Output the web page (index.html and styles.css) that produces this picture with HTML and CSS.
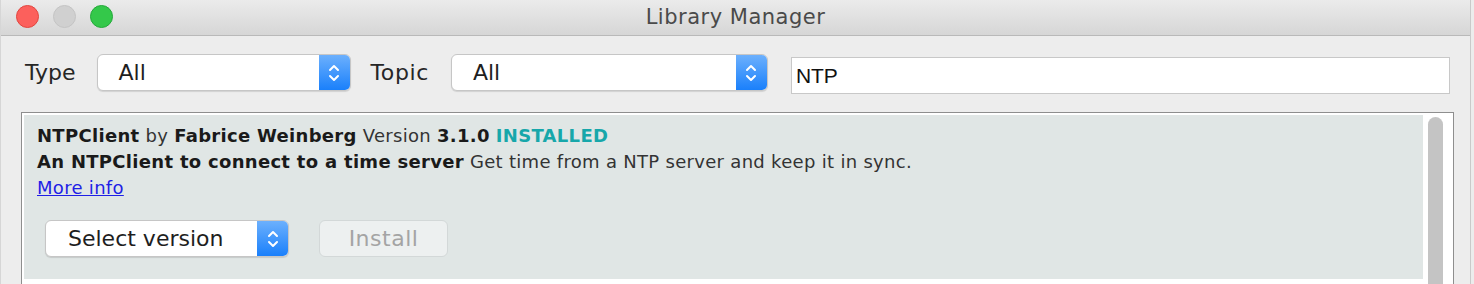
FILE: index.html
```html
<!DOCTYPE html>
<html lang="en">
<head>
    <meta charset="UTF-8">
    <title>Library Manager</title>
    <link rel="stylesheet" href="styles.css">
</head>
<body>
    <div class="window">
        <div class="titlebar">
            <div class="lights">
                <span class="light red"></span>
                <span class="light gray"></span>
                <span class="light green"></span>
            </div>
            <div class="title">Library Manager</div>
        </div>

        <div class="toolbar">
            <label class="field-label">Type</label>
            <div class="select select-type">
                <span class="select-text">All</span>
                <span class="select-arrows">
                    <svg width="14" height="22" viewBox="0 0 14 22"><path d="M3 8 L7 4 L11 8 M3 14 L7 18 L11 14" fill="none" stroke="#fff" stroke-width="2" stroke-linecap="round" stroke-linejoin="round"/></svg>
                </span>
            </div>
            <label class="field-label topic-label">Topic</label>
            <div class="select select-topic">
                <span class="select-text">All</span>
                <span class="select-arrows">
                    <svg width="14" height="22" viewBox="0 0 14 22"><path d="M3 8 L7 4 L11 8 M3 14 L7 18 L11 14" fill="none" stroke="#fff" stroke-width="2" stroke-linecap="round" stroke-linejoin="round"/></svg>
                </span>
            </div>
            <div class="search">NTP</div>
        </div>

        <div class="list-panel">
            <div class="list">
                <div class="item">
                    <div class="line"><b>NTPClient</b> by <b>Fabrice Weinberg</b> Version <b>3.1.0</b> <b class="installed">INSTALLED</b></div>
                    <div class="line"><b>An NTPClient to connect to a time server</b> Get time from a NTP server and keep it in sync.</div>
                    <div class="line"><a href="#" class="more">More info</a></div>
                    <div class="actions">
                        <div class="select select-version">
                            <span class="select-text">Select version</span>
                            <span class="select-arrows">
                                <svg width="14" height="22" viewBox="0 0 14 22"><path d="M3 8 L7 4 L11 8 M3 14 L7 18 L11 14" fill="none" stroke="#fff" stroke-width="2" stroke-linecap="round" stroke-linejoin="round"/></svg>
                            </span>
                        </div>
                        <button class="install" disabled>Install</button>
                    </div>
                </div>
            </div>
            <div class="scrollbar">
                <div class="thumb"></div>
            </div>
        </div>
    </div>
</body>
</html>
```

FILE: styles.css
```css
* {
    margin: 0;
    padding: 0;
    box-sizing: border-box;
}

body {
    background: #ececec;
    font-family: 'DejaVu Sans', Verdana, sans-serif;
    height: 284px;
    overflow: hidden;
}

.window {
    width: 1471px;
    height: 284px;
    background: #ededed;
    border-right: 1px solid #c9c9c9;
    border-left: 1px solid #d6d6d6;
}

.titlebar {
    height: 36px;
    background: linear-gradient(#ebebeb, #d6d6d6);
    border-bottom: 1px solid #b9b9b9;
    display: flex;
    align-items: center;
    position: relative;
}

.lights {
    display: flex;
    gap: 14px;
    padding-left: 15px;
    padding-bottom: 2px;
}

.light {
    width: 23px;
    height: 23px;
    border-radius: 50%;
}

.red {
    background: #fc605c;
    border: 1px solid #e2463f;
}

.gray {
    background: #d0d0d0;
    border: 1px solid #c4c4c4;
}

.green {
    background: #34c84a;
    border: 1px solid #24a93a;
}

.title {
    position: absolute;
    left: 0;
    right: 0;
    top: 5px;
    text-align: center;
    font-family: 'DejaVu Sans', Verdana, sans-serif;
    font-size: 21px;
    letter-spacing: 0.5px;
    color: #4a4a4a;
}

.toolbar {
    display: flex;
    align-items: center;
    padding: 0 0 3px 24px;
    height: 76px;
}

.field-label {
    font-size: 22px;
    color: #262626;
    margin-right: 21px;
    padding-bottom: 1px;
}

.topic-label {
    margin-left: 20px;
    margin-right: 22px;
    letter-spacing: 0.6px;
}

.select {
    display: flex;
    height: 37px;
    background: #fff;
    border: 1px solid #c6c6c6;
    border-radius: 6px;
    box-shadow: 0 1px 1px rgba(0, 0, 0, 0.12);
    overflow: hidden;
}

.select-type {
    width: 254px;
}

.select-topic {
    width: 317px;
}

.select-text {
    flex: 1;
    font-size: 22px;
    color: #1e1e1e;
    padding-left: 21px;
    line-height: 36px;
}

.select-arrows {
    width: 31px;
    background: linear-gradient(#6cb0fd, #1a80fb);
    display: flex;
    align-items: center;
    justify-content: center;
}

.search {
    margin-left: 23px;
    width: 659px;
    height: 37px;
    background: #fff;
    border: 1px solid #c8c8c8;
    font-family: 'Liberation Sans', Arial, sans-serif;
    font-size: 21px;
    color: #111;
    line-height: 35px;
    padding-left: 4px;
    margin-top: 5px;
}

.list-panel {
    margin-left: 20px;
    width: 1433px;
    height: 200px;
    border: 1px solid #8e8e8e;
    border-bottom: none;
    background: #fff;
    padding: 2px 2px 0 2px;
    display: flex;
}

.list {
    flex: 1;
}

.item {
    background: #e0e6e5;
    padding: 8px 0 22px 13px;
    font-size: 18px;
    letter-spacing: 0.3px;
    color: #333;
}

.line {
    line-height: 26px;
    white-space: nowrap;
}

.line b {
    color: #1a1a1a;
}

.line b.installed {
    color: #17a7aa;
}

.more {
    color: #1f1fe6;
    text-decoration: underline;
}

.actions {
    display: flex;
    align-items: center;
    gap: 30px;
    margin-top: 19px;
    margin-left: 8px;
    letter-spacing: 0;
}

.select-version {
    width: 244px;
}

.select-version .select-text {
    font-size: 22px;
    padding-left: 22px;
}

.install {
    width: 129px;
    height: 37px;
    border: 1px solid #d3d8d8;
    border-radius: 6px;
    background: #edf0f0;
    color: #a4a4a4;
    font-family: 'DejaVu Sans', Verdana, sans-serif;
    font-size: 22px;
    letter-spacing: 0.5px;
}

.scrollbar {
    width: 28px;
    padding: 2px 7px 0 5px;
}

.thumb {
    width: 15px;
    height: 200px;
    background: #c4c4c4;
    border-radius: 8px 8px 0 0;
}
```
